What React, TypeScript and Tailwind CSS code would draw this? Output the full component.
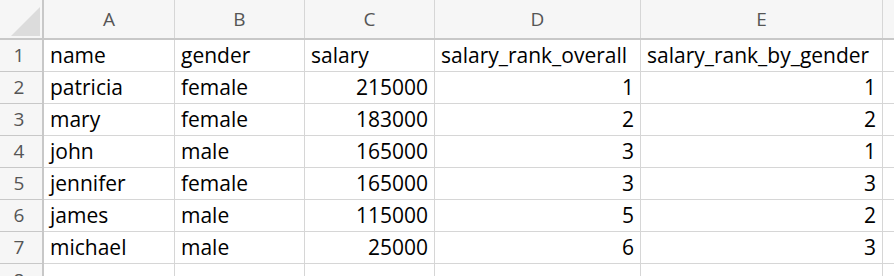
import React from "react";

const columns = ["A", "B", "C", "D", "E"];

const rows: (string | number)[][] = [
  ["name", "gender", "salary", "salary_rank_overall", "salary_rank_by_gender"],
  ["patricia", "female", 215000, 1, 1],
  ["mary", "female", 183000, 2, 2],
  ["john", "male", 165000, 3, 1],
  ["jennifer", "female", 165000, 3, 3],
  ["james", "male", 115000, 5, 2],
  ["michael", "male", 25000, 6, 3],
];

const gridCols = "grid grid-cols-[44px_131px_130px_130px_206px_242px_1fr]";

export default function App() {
  return (
    <div className="w-[894px] h-[276px] overflow-hidden bg-white font-['Open_Sans','Lato',sans-serif] text-black">
      {/* column letters */}
      <div className={`${gridCols} h-[40px] bg-[#f6f6f6] border-b-2 border-[#c8c8c8]`}>
        <div className="relative border-r-2 border-[#c8c8c8]">
          <svg className="absolute left-0 top-0" width="44" height="40" viewBox="0 0 44 40">
            <polygon points="11,36 40,7 40,36" fill="#dcdcdc" />
          </svg>
        </div>
        {columns.map((c) => (
          <div
            key={c}
            className="flex items-center justify-center border-r border-[#d6d6d6] text-[19px] text-[#555]"
          >
            {c}
          </div>
        ))}
        <div />
      </div>

      {/* rows */}
      {rows.map((row, i) => (
        <div key={i} className={`${gridCols} h-[32px]`}>
          <div className="flex items-center justify-center pr-[4px] bg-[#f6f6f6] border-r-2 border-b border-[#c8c8c8] text-[19px] text-[#555]">
            {i + 1}
          </div>
          {row.map((cell, j) => (
            <div
              key={j}
              className={`flex items-center px-[6px] border-r border-b border-[#d6d6d6] text-[21px] whitespace-nowrap overflow-hidden ${
                typeof cell === "number" ? "justify-end" : "justify-start"
              }`}
            >
              {cell}
            </div>
          ))}
          <div className="border-b border-[#d6d6d6]" />
        </div>
      ))}

      <div className={`${gridCols} h-[32px]`}>
        <div className="flex items-center justify-center pr-[4px] bg-[#f6f6f6] border-r-2 border-[#c8c8c8] text-[19px] text-[#555]">
          8
        </div>
        {columns.map((c) => (
          <div key={c} className="border-r border-[#d6d6d6]" />
        ))}
        <div />
      </div>
    </div>
  );
}
